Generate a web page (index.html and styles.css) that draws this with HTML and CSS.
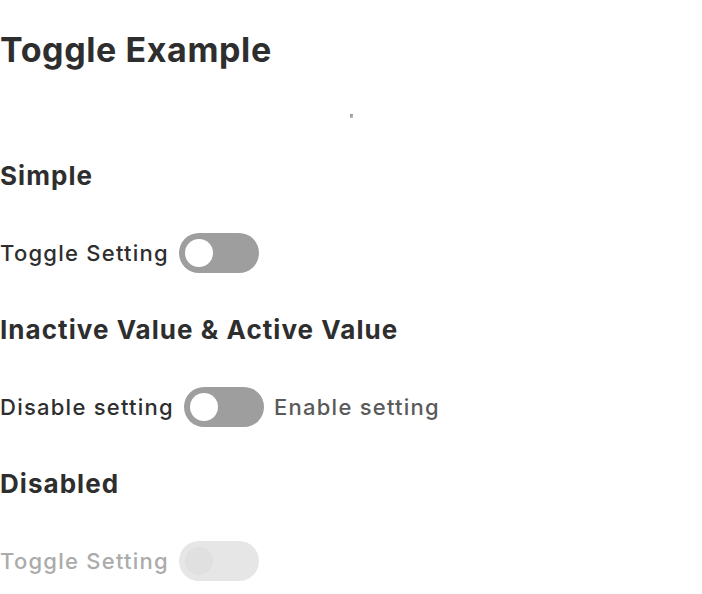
FILE: index.html
```html
<!DOCTYPE html>
<html>
<head>
<meta charset="utf-8">
<link rel="stylesheet" href="styles.css">
</head>
<body>
<div class="page">
  <h1 class="title">Toggle Example</h1>
  <span class="speck"></span>
  <h2 class="section first">Simple</h2>
  <div class="row">
    <span class="label">Toggle Setting</span>
    <span class="toggle"><span class="knob"></span></span>
  </div>
  <h2 class="section">Inactive Value &amp; Active Value</h2>
  <div class="row">
    <span class="label">Disable setting</span>
    <span class="toggle"><span class="knob"></span></span>
    <span class="label muted">Enable setting</span>
  </div>
  <h2 class="section">Disabled</h2>
  <div class="row disabled">
    <span class="label">Toggle Setting</span>
    <span class="toggle"><span class="knob"></span></span>
  </div>
</div>
</body>
</html>
```
FILE: styles.css
```css
html, body {
  margin: 0;
  padding: 0;
  background: #ffffff;
}
body {
  font-family: Inter, "Noto Sans", sans-serif;
  color: #2e2e2e;
}
.page {
  position: relative;
  padding: 27px 0 0 0;
}
.title {
  margin: 0;
  font-size: 34px;
  font-weight: 700;
  line-height: 46px;
  letter-spacing: 0.6px;
}
.speck {
  position: absolute;
  left: 350px;
  top: 114px;
  width: 3px;
  height: 4px;
  background: linear-gradient(135deg, #888 0%, #ccc 100%);
}
.section {
  margin: 0;
  font-size: 26px;
  font-weight: 700;
  line-height: 34px;
  letter-spacing: 1.05px;
}
.section.first {
  margin-top: 86px;
}
.row {
  display: flex;
  align-items: center;
  gap: 10px;
  height: 40px;
  margin: 40px 0;
}
.row:last-child {
  margin-bottom: 0;
}
.label {
  font-size: 22px;
  font-weight: 500;
  letter-spacing: 1.25px;
}
.muted {
  color: #5a5a5a;
}
.toggle {
  display: flex;
  align-items: center;
  box-sizing: border-box;
  width: 80px;
  height: 40px;
  padding: 0 6px;
  border-radius: 20px;
  background: #9e9e9e;
}
.knob {
  width: 28px;
  height: 28px;
  border-radius: 50%;
  background: #ffffff;
}
.disabled .label {
  color: #ababab;
}
.disabled .toggle {
  background: #e6e6e6;
}
.disabled .knob {
  background: #e0e0e0;
}
```
